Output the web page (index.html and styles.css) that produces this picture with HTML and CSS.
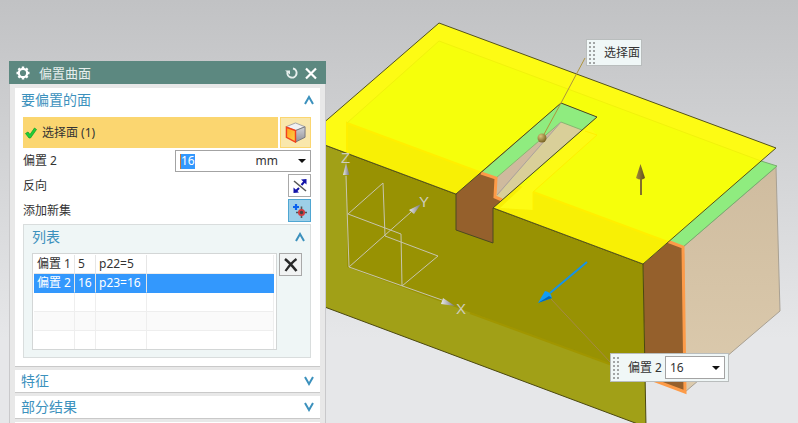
FILE: index.html
```html
<!DOCTYPE html>
<html lang="zh-CN">
<head>
<meta charset="utf-8">
<meta name="viewport" content="width=device-width, initial-scale=1">
<title>偏置曲面</title>
<link rel="stylesheet" href="styles.css">
</head>
<body>
<main class="workspace">
  <svg class="scene" viewBox="0 0 798 423" preserveAspectRatio="xMinYMin slice" aria-hidden="true">
    <defs>
      <linearGradient id="side" x1="0" y1="0" x2="0" y2="1"><stop offset="0" stop-color="#cfbc9f"/><stop offset="1" stop-color="#dccbae"/></linearGradient>
      <linearGradient id="metal" x1="0" y1="0" x2="1" y2="0"><stop offset="0" stop-color="#e8e8e8"/><stop offset="1" stop-color="#77777a"/></linearGradient>
      <linearGradient id="cube-side" x1="0" y1="0" x2="0" y2="1"><stop offset="0" stop-color="#d2d3d8"/><stop offset="1" stop-color="#8f9097"/></linearGradient>
      <linearGradient id="cube-front" x1="0" y1="0" x2="1" y2="1"><stop offset="0" stop-color="#ff9d1c"/><stop offset="1" stop-color="#ffd447"/></linearGradient>
      <linearGradient id="bronze" x1="0" y1="0" x2="1" y2="0"><stop offset="0" stop-color="#a18a3a"/><stop offset="1" stop-color="#62511c"/></linearGradient>
      <radialGradient id="ball" cx=".35" cy=".3" r=".7"><stop offset="0" stop-color="#d9c47c"/><stop offset="1" stop-color="#7a6524"/></radialGradient>
    </defs>
    <!-- solid body -->
    <path d="M683 247 776 167 780 311 685 392Z" fill="url(#side)" stroke="#a8a093"/>
    <path d="M667 242 761 161 777 166 683 247Z" fill="#8fec7f" stroke="#78ad6e"/>
    <path d="M643 264 668 242 684 247 685 392 645 377Z" fill="#95602c"/>
    <path d="M667 241 683 247 685 392 645 377" fill="none" stroke="#fd9b48" stroke-width="3"/>
    <!-- offset sheet, front -->
    <path d="M306 138 643 264 646 427 306 300Z" fill="#a1a017"/>
    <path d="M347 150 643 264 645 377 347 267Z" fill="#989203"/>
    <path d="M470 313 645 377" stroke="#a09600" stroke-width="2"/>
    <path d="M306 138 643 264 646 427 306 300" fill="none" stroke="#4b4810"/>
    <!-- offset sheet, top -->
    <path d="M439 23 776 148 643 264 306 138Z" fill="#fdfb14"/>
    <path d="M439 41 761 161 668 242 347 123Z" fill="#f6ff0b"/>
    <path d="M347 123 668 242 643 264 347 153Z" fill="#f8f005"/>
    <path d="M347 153V123L668 242" fill="none" stroke="#fff000" stroke-width="2"/>
    <path d="M347 123 439 41 761 161" fill="none" stroke="#f1f20c"/>
    <path d="M439 23 776 148 643 264 306 138Z" fill="none" stroke="#53511d"/>
    <!-- slot -->
    <path d="M588 125 597 135 533 192V210L500 208Z" fill="#fdfb14"/>
    <path d="M585 131 597 135 533 192V210" fill="none" stroke="#fff000"/>
    <path d="M456 194 561 103 597 117 493 208V243L456 230Z" fill="#95602c"/>
    <path d="M481 173 561 103 597 117 502 200 496 197V178Z" fill="#8fec7f"/>
    <path d="M496 178 561 122 582 130 502 200 496 197Z" fill="#d9cf99"/>
    <path d="M496 178 561 122 497 196Z" fill="#cfba9e"/>
    <path d="M496 178 561 122 582 130" fill="none" stroke="#86b771"/>
    <path d="M561 122 497 195" stroke="#aaa39b"/>
    <path d="M481 173 496 178 495 197 502 200" fill="none" stroke="#fd9b48" stroke-width="3"/>
    <path d="M456 194 561 103 597 117 493 208V243L456 230Z" fill="none" stroke="#4c4921"/>
    <!-- leaders -->
    <path d="M585 58 561 103 542 138" fill="none" stroke="#ae953d"/>
    <circle cx="542" cy="138" r="4.5" fill="url(#ball)"/>
    <path d="M551 299 611 363" stroke="#a58a45"/>
    <!-- direction handles -->
    <path d="M641 178V195" stroke="#83702b" stroke-width="2"/>
    <path d="M640.500 164 645 178Q641 181 636 178Z" fill="url(#bronze)"/>
    <path d="M587 262 550 293" stroke="#1692e8" stroke-width="2"/>
    <path d="M538 303 545 291Q551 292 552 298Z" fill="#119cf5"/>
    <path d="M538 303 549 296 552 298Z" fill="#0768b6"/>
    <!-- coordinate triad -->
    <g fill="none" stroke="#c7c5ae">
      <path d="M346 176 349 267 442 300M349 267 411 212M348 214 383 183 385 236 438 256 402 286 401 234 348 214"/>
    </g>
    <path d="M346 163 349.500 175H343Z" fill="url(#metal)"/>
    <path d="M421 204 414 214 409 210Z" fill="url(#metal)"/>
    <path d="M455 306 441 304 443 298Z" fill="url(#metal)"/>
    <g class="axis-label"><text x="341" y="163">Z</text><text x="419" y="207">Y</text><text x="456" y="314">X</text></g>
  </svg>

  <section class="panel" aria-label="偏置曲面">
    <header class="titlebar">
      <svg class="gear" viewBox="0 0 14 14" aria-hidden="true"><circle cx="7" cy="7" r="4.200" fill="none" stroke="#fff" stroke-width="2.200"/><path d="M7 .5V2.500M7 11.500V13.500M.5 7H2.500M11.500 7H13.500M2.400 2.400 4 4M10 10 11.600 11.600M2.400 11.600 4 10M10 4 11.600 2.400" stroke="#fff" stroke-width="2.400"/></svg>
      <h1>偏置曲面</h1>
      <button type="button" aria-label="重置"><svg viewBox="0 0 14 14"><path d="M8 2.500A4.600 4.600 0 1 1 2.500 6" fill="none" stroke="#e6eeec" stroke-width="2"/><path d="M0 4.500H5V8.500Z" fill="#e6eeec"/></svg></button>
      <button type="button" aria-label="关闭"><svg viewBox="0 0 14 14"><path d="M2 2.500 12 12.500M12 2.500 2 12.500" stroke="#fff" stroke-width="2.200"/></svg></button>
    </header>
    <div class="groups">
      <section class="group">
        <button type="button" class="group-head"><span>要偏置的面</span><svg class="chevron" viewBox="0 0 12 10"><path d="M2 9 6 2 10 9" /></svg></button>
        <div class="group-body">
          <div class="select-row">
            <div class="select-face">
              <svg viewBox="0 0 12 12" aria-hidden="true"><path d="M.5 6.500 3 5 5 7.500 9.500 1 11.500 2.500 5.500 11H4Z" fill="#1fd038" stroke="#0b9a22" stroke-width=".7"/></svg>
              <span>选择面 (1)</span>
            </div>
            <button type="button" class="face-button" aria-label="面"><svg viewBox="0 0 22 22"><path d="M1 5 11 1 21 5 11 9Z" fill="#f1f1f3" stroke="#a2a2a6"/><path d="M11 9 21 5V16L11 21Z" fill="url(#cube-side)" stroke="#77777b"/><path d="M1.500 5.500 11 9V21L1.500 16Z" fill="url(#cube-front)" stroke="#f2411c" stroke-width="1.500"/></svg></button>
          </div>
          <div class="row">
            <label for="offset">偏置 2</label>
            <div class="combo"><input id="offset" class="selected" value="16"><span class="unit">mm</span><button type="button" class="drop" aria-label="单位"></button></div>
          </div>
          <div class="row">
            <label for="reverse">反向</label>
            <button type="button" id="reverse" class="tool"><svg viewBox="0 0 16 16"><path d="M2 3 14 13" stroke="#555" stroke-width="1.600"/><path d="M4 13 7 10M9.500 7 13 3" stroke="#1414a8" stroke-width="2"/><path d="M14.500 1V6.500L9 1.500ZM1.500 15V9.500L7 14.500Z" fill="#1414a8"/></svg></button>
          </div>
          <div class="row">
            <label for="add-set">添加新集</label>
            <button type="button" id="add-set" class="tool active"><svg viewBox="0 0 16 16"><path d="M4 1V7M1 4H7" stroke="#0a62ee" stroke-width="2.200"/><path d="M9.500 3.500V15M4 9.500H15" stroke="#555" stroke-width="1.600"/><circle cx="9.500" cy="9.500" r="2.600" fill="#444" stroke="#d33a3f" stroke-width="1.800"/></svg></button>
          </div>
          <section class="list">
            <button type="button" class="group-head"><span>列表</span><svg class="chevron" viewBox="0 0 12 10"><path d="M2 9 6 2 10 9"/></svg></button>
            <div class="list-body">
              <div class="table-box">
                <table>
                  <colgroup><col class="c-name"><col class="c-value"><col class="c-expr"><col></colgroup>
                  <tbody>
                    <tr><td>偏置 1</td><td>5</td><td>p22=5</td><td></td></tr>
                    <tr class="current"><td>偏置 2</td><td>16</td><td>p23=16</td><td></td></tr>
                    <tr><td></td><td></td><td></td><td></td></tr>
                    <tr class="alt"><td></td><td></td><td></td><td></td></tr>
                    <tr><td></td><td></td><td></td><td></td></tr>
                  </tbody>
                </table>
              </div>
              <button type="button" class="tool remove" aria-label="移除"><svg viewBox="0 0 16 16"><path d="M2 2Q7 6 13.500 14" fill="none" stroke="#282828" stroke-width="2.600"/><path d="M13.500 2Q8 6 2.500 14" fill="none" stroke="#282828" stroke-width="2.200"/></svg></button>
            </div>
          </section>
        </div>
      </section>
      <section class="group"><button type="button" class="group-head closed"><span>特征</span><svg class="chevron" viewBox="0 0 12 10"><path d="M2 1 6 8 10 1"/></svg></button></section>
      <section class="group"><button type="button" class="group-head closed"><span>部分结果</span><svg class="chevron" viewBox="0 0 12 10"><path d="M2 1 6 8 10 1"/></svg></button></section>
      <section class="group"><div class="group-head closed"></div></section>
    </div>
  </section>

  <div class="callout face-callout"><span class="grip"></span><span>选择面</span></div>
  <div class="callout offset-callout">
    <span class="grip"></span><label for="scene-offset">偏置 2</label>
    <div class="combo"><input id="scene-offset" value="16"><button type="button" class="drop" aria-label="选项"></button></div>
  </div>
</main>
</body>
</html>
```
FILE: styles.css
```css
* { box-sizing: border-box; }

body {
  margin: 0;
  font: 12px/20px "Noto Sans", "Noto Sans CJK SC", sans-serif;
  color: #333;
}

h1 { margin: 0; font: inherit; }

button, input { font: inherit; color: inherit; margin: 0; padding: 0; border: 0; background: none; }
svg { display: block; }

.workspace {
  position: relative;
  display: grid;
  grid-template-columns: minmax(290px, 317fr) 472fr;
  height: 100vh;
  padding: 61px 0 0 9px;
  overflow: hidden;
  background: linear-gradient(#c1c2c4, #e6e7e9 80%);
}

.scene { position: absolute; inset: 0; width: 100%; height: 100%; }
.axis-label { font: 15px "Liberation Sans", sans-serif; fill: #cfcdbc; }

.panel { position: relative; min-width: 0; }

.titlebar {
  display: flex;
  align-items: center;
  gap: 5px;
  height: 23px;
  padding: 0 8px 0 7px;
  background: #5c8880;
  color: #e6eeec;
  font-size: 13px;
}
.titlebar svg { width: 14px; height: 14px; }
.titlebar h1 { flex: 1; padding-left: 4px; }

.groups {
  display: flex;
  flex-direction: column;
  gap: 3px;
  padding: 4px 5px;
  background: #e8e8e8;
  border: solid #c9c9cb;
  border-width: 0 1px;
}
.group { background: #fff; border-bottom: 1px solid #c9c9c9; }

.group-head {
  display: flex;
  align-items: center;
  justify-content: space-between;
  width: 100%;
  height: 24px;
  padding: 0 5px 0 6px;
  color: #3c91bd;
  font-size: 14px;
}
.group-head.closed { height: 22px; }
.chevron { width: 12px; height: 10px; fill: none; stroke: #3c91bd; stroke-width: 2; }

.group-body { display: flex; flex-direction: column; gap: 2px; padding: 5px 9px 8px 8px; }

.select-row { display: flex; gap: 2px; height: 31px; }
.select-face { display: flex; flex: 1; align-items: center; gap: 5px; padding-left: 2px; background: #fbd670; }
.select-face svg { width: 12px; height: 12px; }
.face-button { display: grid; place-items: center; width: 31px; background: #f9e7ac; border: 1px solid #fbd670; }
.face-button svg { width: 21px; height: 21px; }

.row { display: flex; align-items: center; justify-content: space-between; }

.combo { display: flex; align-items: center; height: 22px; background: #fff; border: 1px solid #a3a3a3; }
.combo input { width: 40px; height: 15px; padding: 0 4px; }
.row .combo { width: 136px; padding-left: 4px; }
.combo input.selected { width: 15px; padding: 0; background: #3398fd; color: #fff; border-left: 1px solid #c8783c; }
.unit { margin-left: auto; }
.drop { display: grid; place-items: center; width: 16px; height: 20px; }
.drop::before { content: ""; border: solid transparent; border-width: 4px 4px 0; border-top-color: #111; }
.row .drop { margin-left: 16px; }

.tool { display: grid; place-items: center; width: 23px; height: 23px; background: #fff; border: 1px solid #a9a9a9; }
.tool svg { width: 16px; height: 16px; }
.tool.active { background: #9dcfe8; border-color: #4fa6d2; }
.tool.remove { background: #f1f3f3; }

.list { background: #eff6f6; border: 1px solid #d9dddd; }
.list .group-head { padding: 0 4px 0 8px; }
.list-body { display: flex; gap: 2px; padding: 4px 8px 7px 8px; }
.table-box { flex: 1; padding: 1px 2px 0 1px; background: #fff; border: 1px solid #d3d6d6; }

table { width: 100%; table-layout: fixed; border-collapse: separate; border-spacing: 0; }
td { height: 19px; padding: 0 0 0 3px; line-height: 18px; border: solid #e6e6e6; border-width: 0 1px 1px 0; white-space: nowrap; }
td:empty { border-color: #eee; }
tr:last-child td { height: 18px; border-bottom: 0; }
.c-name { width: 41px; }
.c-value { width: 21px; }
.c-expr { width: 51px; }
.current { background: #3398fd; color: #fff; }
.current td { border-bottom-color: #3398fd; }
.current td:last-child { border-color: #3398fd; }
.alt { background: #fafafa; }

.callout {
  position: absolute;
  display: flex;
  align-items: center;
  background: #f0f7f7;
  border: 1px solid #b9bdbd;
}
.grip {
  width: 8px;
  height: 24px;
  margin: 0 8px 0 1px;
  background: radial-gradient(circle, #a2a5a5 1px, transparent 1px) 0 0 / 4px 4px;
}
.face-callout { left: 586px; top: 39px; height: 27px; padding-right: 1px; }
.offset-callout { left: 610px; top: 353px; height: 29px; padding-right: 3px; }
.offset-callout label { margin-right: 3px; }
.offset-callout .combo { width: 60px; height: 23px; justify-content: space-between; }
```
